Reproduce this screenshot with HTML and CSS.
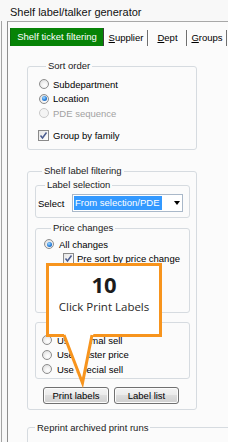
FILE: index.html
```html
<!DOCTYPE html>
<html>
<head>
<meta charset="utf-8">
<link rel="stylesheet" href="styles.css">
</head>
<body>
<div class="window">
  <div class="title">Shelf label/talker generator</div>
  <div class="frame">
    <div class="tabctl">
      <div class="tabs">
        <div class="tab active">Shelf ticket filtering</div>
        <div class="tab t-sup"><u>S</u>upplier</div>
        <div class="tab t-dept"><u>D</u>ept</div>
        <div class="tab t-grp"><u>G</u>roups</div>
      </div>
      <div class="page">
        <fieldset class="group g-sort">
          <legend>Sort order</legend>
          <div class="opt"><span class="radio"></span>Subdepartment</div>
          <div class="opt"><span class="radio on"></span>Location</div>
          <div class="opt disabled"><span class="radio"></span>PDE sequence</div>
          <div class="opt chk-row"><span class="check"><svg width="9" height="9" viewBox="0 0 9 9"><path d="M1.5 4.5 L3.5 7 L7.5 1.5" fill="none" stroke="#4b5c8f" stroke-width="1.5"/></svg></span>Group by family</div>
        </fieldset>

        <fieldset class="group g-shelf">
          <legend>Shelf label filtering</legend>
          <fieldset class="group g-labsel">
            <legend>Label selection</legend>
            <div class="sel-row">
              <span class="sel-label">Select</span>
              <div class="combo">
                <span class="combo-text">From selection/PDE</span>
                <span class="combo-arrow"></span>
              </div>
            </div>
          </fieldset>
          <fieldset class="group g-price">
            <legend>Price changes</legend>
            <div class="opt"><span class="radio on"></span>All changes</div>
            <div class="opt sub"><span class="check"><svg width="9" height="9" viewBox="0 0 9 9"><path d="M1.5 4.5 L3.5 7 L7.5 1.5" fill="none" stroke="#4b5c8f" stroke-width="1.5"/></svg></span>Pre sort by price change</div>
          </fieldset>
          <div class="group g-sell">
            <div class="opt"><span class="radio"></span>Use normal sell</div>
            <div class="opt"><span class="radio"></span>Use master price</div>
            <div class="opt"><span class="radio"></span>Use special sell</div>
          </div>
          <div class="buttons">
            <div class="btn b-print">Print labels</div>
            <div class="btn b-list">Label list</div>
          </div>
        </fieldset>

        <fieldset class="group g-reprint">
          <legend>Reprint archived print runs</legend>
        </fieldset>
      </div>
    </div>
  </div>

  <div class="callout">
    <div class="step">10</div>
    <div class="hint">Click Print Labels</div>
    <svg class="tail" width="37" height="56" viewBox="0 0 37 56">
      <polygon points="4,0 34,0 33,3.5 22.5,51 4,3.5" fill="#fff"/>
      <polyline points="4,3 22.5,51 32,3" fill="none" stroke="#f7941d" stroke-width="3" stroke-linejoin="miter"/>
    </svg>
  </div>
</div>
</body>
</html>
```

FILE: styles.css
```css
* { box-sizing: border-box; }

body {
  margin: 0;
  background: #f7f7f7;
  font-family: "Liberation Sans", Arial, sans-serif;
  font-size: 9.5px;
  color: #000;
}

.window {
  position: relative;
  width: 228px;
  height: 442px;
  overflow: hidden;
  background: #f8f8f8;
}

.title {
  height: 21px;
  padding: 4px 0 0 10px;
  line-height: 17px;
  font-size: 11px;
  color: #111;
}

.frame {
  margin-left: 1px;
  border-left: 1px solid #a3a3a3;
  padding-left: 5px;
  height: 421px;
}

.tabctl {
  border-left: 1px solid #8e8e8e;
  border-top: 1px solid #a8a8a8;
  width: 320px;
  height: 421px;
  background: #fbfbfb;
}

.tabs {
  display: flex;
  align-items: flex-end;
  padding: 6px 0 0 2px;
  height: 24px;
}

.tab {
  height: 16px;
  line-height: 16px;
  text-align: center;
  border-left: 1px solid #ffffff;
  border-right: 1px solid #6f6f6f;
  white-space: nowrap;
}

.tab.active {
  width: 94px;
  height: 18px;
  line-height: 18px;
  background: #068306;
  color: #fff;
  border-left: 1px solid #0b6e0b;
  border-right: 1px solid #3c3c3c;
}

.t-sup { width: 44px; }
.t-dept { width: 39px; }
.t-grp { width: 40px; }

.page {
  padding: 0 0 0 19px;
}

.group {
  margin: 0;
  padding: 0;
  min-width: 0;
  border: 1px solid #d6dbe0;
  border-radius: 3px;
}

legend {
  margin-left: 7px;
  padding: 0 2px;
  line-height: 12px;
  color: #1a1a1a;
}

.opt {
  display: flex;
  align-items: center;
  height: 14.5px;
  white-space: nowrap;
}

.radio {
  flex: none;
  width: 10px;
  height: 10px;
  margin-right: 4px;
  border-radius: 50%;
  border: 1px solid #8d8d8d;
  background: radial-gradient(circle at 60% 65%, #ffffff 0, #f2f2f2 40%, #d4d4d4 100%);
  position: relative;
}

.radio.on::after {
  content: "";
  position: absolute;
  left: 1.5px;
  top: 1.5px;
  width: 5px;
  height: 5px;
  border-radius: 50%;
  background: radial-gradient(circle at 40% 35%, #a8dcff 0, #2e86e0 50%, #134a9e 100%);
}

.check {
  flex: none;
  width: 11px;
  height: 11px;
  margin-right: 4px;
  border: 1px solid #8a8a8a;
  background: linear-gradient(135deg, #e6e6e6, #ffffff);
  display: flex;
  align-items: center;
  justify-content: center;
}

.disabled { color: #a2a2a2; }
.disabled .radio { border-color: #c9c9c9; background: #f4f4f4; }

/* Sort order */
.g-sort {
  margin-top: 14px;
  width: 170px;
  padding: 5px 0 6px 11px;
}

.chk-row {
  margin-top: 8px;
  margin-left: -1px;
}

/* Shelf label filtering */
.g-shelf {
  margin-top: 15px;
  width: 170px;
  padding: 2px 6px 5px 7px;
}

.g-labsel {
  padding: 3px 0 5px 2px;
}

.sel-row {
  display: flex;
  align-items: center;
}

.sel-label {
  width: 34px;
}

.combo {
  width: 111px;
  height: 18px;
  border: 1px solid #a9b8c9;
  background: #fff;
  display: flex;
  align-items: center;
  padding-left: 1px;
}

.combo-text {
  background: #3399ff;
  color: #fff;
  line-height: 14px;
  padding: 0 1px;
  width: 88px;
  white-space: nowrap;
  overflow: hidden;
}

.combo-arrow {
  margin-left: 12px;
  width: 0;
  height: 0;
  border-left: 3.5px solid transparent;
  border-right: 3.5px solid transparent;
  border-top: 4px solid #000;
}

.g-price {
  margin-top: 4px;
  padding: 3px 0 0 8px;
  height: 91px;
}

.g-price .radio { margin-right: 5px; }

.sub { padding-left: 19px; }
.sub .check { margin-right: 3px; }

.g-sell {
  margin-top: 9px;
  padding: 10px 0 1px 6px;
}

.g-sell .radio { margin-right: 5px; }

.buttons {
  display: flex;
  gap: 5px;
  margin: 8px 0 0 8px;
}

.btn {
  height: 17px;
  line-height: 15px;
  text-align: center;
  border: 1px solid #707070;
  border-radius: 3px;
  background: linear-gradient(#f4f4f4 0, #ebebeb 45%, #dddddd 50%, #cfcfcf 100%);
  box-shadow: inset 0 0 0 1px #fcfcfc;
}

.b-print { width: 66px; }
.b-list { width: 65px; }

.g-reprint {
  margin-top: 12px;
  width: 300px;
  height: 40px;
}

/* Callout */
.callout {
  position: absolute;
  left: 46px;
  top: 263px;
  width: 116px;
  height: 74px;
  border: 3px solid #f7941d;
  background: #fff;
  font-family: "Open Sans", "Liberation Sans", sans-serif;
  text-align: center;
  color: #222;
}

.step {
  margin-top: 4px;
  font-size: 22px;
  font-weight: 700;
  line-height: 28px;
  color: #1c1c1c;
}

.hint {
  margin-top: 1px;
  font-size: 11.5px;
  line-height: 16px;
  color: #2a2a2a;
}

.tail {
  position: absolute;
  left: 11px;
  top: 66px;
}
```
